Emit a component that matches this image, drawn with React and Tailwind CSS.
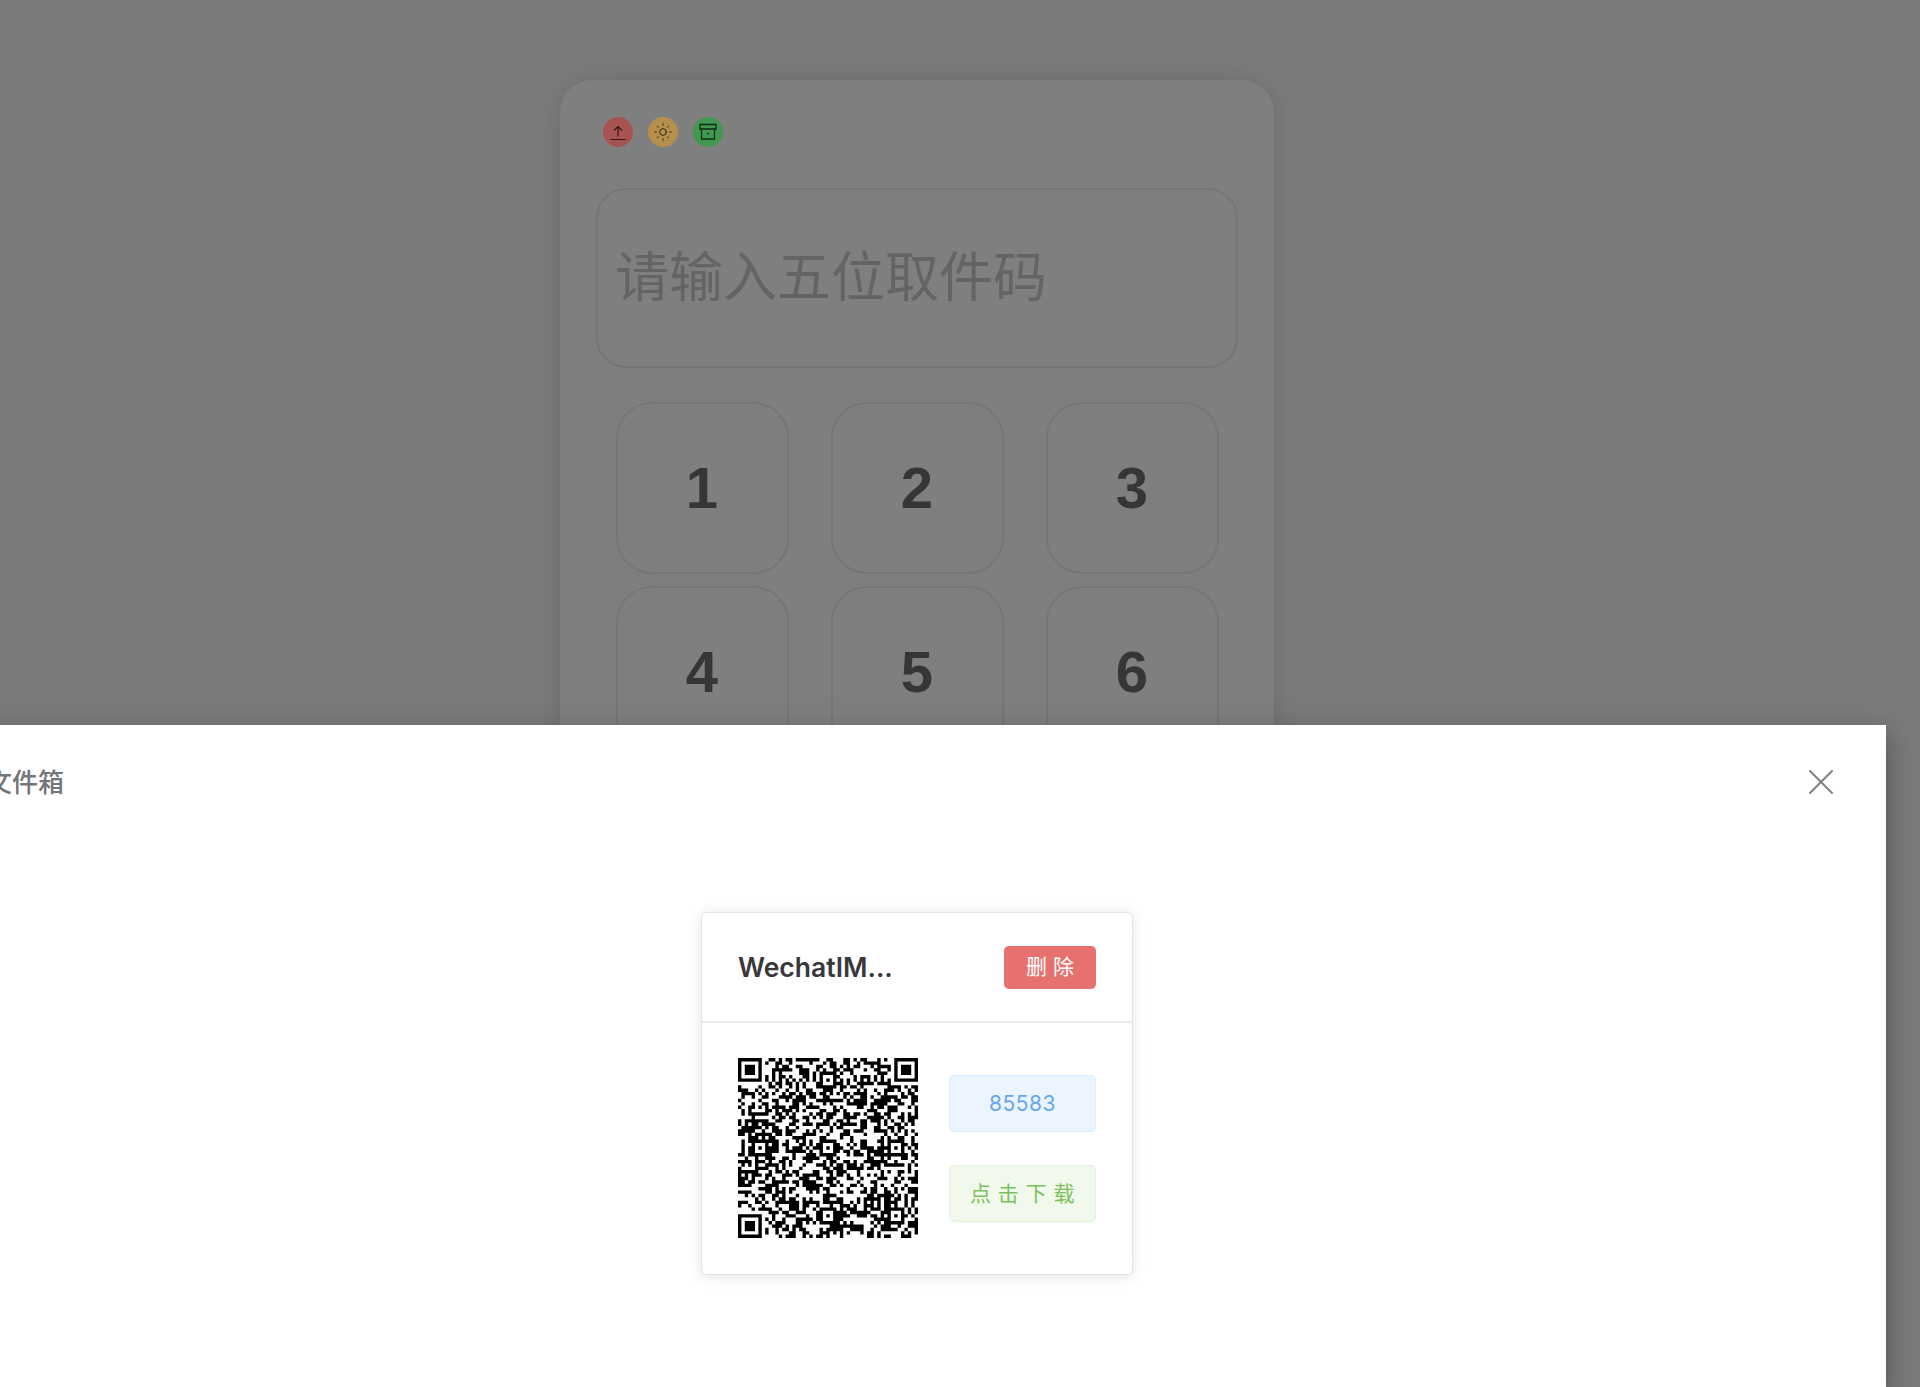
import { Sun, X } from "lucide-react";

const KEYS = ["1", "2", "3", "4", "5", "6"];

// stand-in QR: version 9 layout (53 modules) with seeded data modules
function buildQrPath() {
  const size = 53;
  const grid = [];
  let seed = 85583;
  for (let y = 0; y < size; y++) {
    const row = [];
    for (let x = 0; x < size; x++) {
      seed = (seed * 1103515245 + 12345) & 0x7fffffff;
      row.push(((seed >> 16) & 7) < 4);
    }
    grid.push(row);
  }

  const finder = (ox, oy) => {
    for (let y = -1; y < 8; y++) {
      for (let x = -1; x < 8; x++) {
        const gx = ox + x;
        const gy = oy + y;
        if (gx < 0 || gy < 0 || gx >= size || gy >= size) continue;
        const ring = x === 0 || x === 6 || y === 0 || y === 6;
        const core = x >= 2 && x <= 4 && y >= 2 && y <= 4;
        const inside = x >= 0 && x <= 6 && y >= 0 && y <= 6;
        grid[gy][gx] = inside && (ring || core);
      }
    }
  };
  finder(0, 0);
  finder(size - 7, 0);
  finder(0, size - 7);

  for (let i = 8; i < size - 8; i++) {
    grid[6][i] = i % 2 === 0;
    grid[i][6] = i % 2 === 0;
  }

  [6, 26, 46].forEach((cy) => {
    [6, 26, 46].forEach((cx) => {
      if ((cx === 6 && cy === 6) || (cx === 46 && cy === 6) || (cx === 6 && cy === 46)) return;
      for (let y = -2; y <= 2; y++) {
        for (let x = -2; x <= 2; x++) {
          grid[cy + y][cx + x] = Math.max(Math.abs(x), Math.abs(y)) !== 1;
        }
      }
    });
  });

  let d = "";
  grid.forEach((row, y) => {
    row.forEach((on, x) => {
      if (on) d += `M${x} ${y}h1v1h-1z`;
    });
  });
  return d;
}

const qrPath = buildQrPath();

function App() {
  return (
    <div className="relative h-screen overflow-hidden bg-[#7b7b7b] font-['Inter','Noto_Sans_CJK_SC',sans-serif]">
      {/* PAGE BEHIND THE DRAWER */}
      <div className="flex justify-center pt-[80px] pr-[86px]">
        <div className="h-[800px] w-[714px] rounded-t-[32px] bg-[#807f80] px-[36px] pt-[36.500px] shadow-[0_0_24px_rgba(0,0,0,0.12)]">
          <div className="ml-[7px] flex gap-[15px]">
            <div className="flex h-[30px] w-[30px] items-center justify-center rounded-full bg-[#a85252] text-[#2c1a1a]">
              <svg width="30" height="30" viewBox="0 0 30 30" fill="none" stroke="currentColor" strokeWidth="1.2">
                <path d="M15 9.500v10M11 13.500l4-4 4 4M7.500 22.500h15" />
              </svg>
            </div>
            <div className="flex h-[30px] w-[30px] items-center justify-center rounded-full bg-[#b78f4c] text-[#2f2715]">
              <Sun size={20} strokeWidth={1.2} />
            </div>
            <div className="flex h-[30px] w-[30px] items-center justify-center rounded-full bg-[#3f9a4f] text-[#10291a]">
              <svg width="30" height="30" viewBox="0 0 30 30" fill="none" stroke="currentColor" strokeWidth="1.3">
                <path d="M7 7.500h16v4.500H7zM8.500 12v10h13V12M14 16.500h2" />
              </svg>
            </div>
          </div>

          <input
            readOnly
            placeholder="请输入五位取件码"
            className="mt-[41px] block h-[180px] w-[642px] rounded-[30px] border-2 border-[#767577] bg-transparent px-[17px] text-[54px] text-[#656465] outline-none placeholder:text-[#656465]"
          />

          <div className="mt-[34px] grid grid-cols-[173px_173px_173px] justify-center gap-x-[42px] gap-y-[12px]">
            {KEYS.map((k) => (
              <button
                key={k}
                className="flex h-[172px] items-center justify-center rounded-[36px] border-2 border-[#767577] font-['Liberation_Sans',sans-serif] text-[58px] font-bold text-[#363537]"
              >
                {k}
              </button>
            ))}
          </div>
        </div>
      </div>

      {/* DRAWER */}
      <div className="absolute top-[725px] right-[34px] bottom-0 left-[-52px] bg-white shadow-[0_8px_10px_-5px_rgba(0,0,0,0.2),0_16px_24px_2px_rgba(0,0,0,0.14),0_6px_30px_5px_rgba(0,0,0,0.12)]">
        <div className="flex h-[114px] items-center justify-between pr-[43px] pl-[38px]">
          <span className="text-[26px] font-medium text-[#72767b]">文件箱</span>
          <X size={44} strokeWidth={1.1} className="text-[#7f8285]" />
        </div>

        <div className="mt-[73px] flex justify-center">
          <div className="h-[363px] w-[432px] rounded-[5px] border border-[#e4e5ec] bg-white shadow-[0_2px_14px_rgba(0,0,0,0.11)]">
            <div className="flex h-[110px] items-center justify-between border-b-2 border-[#e8ebee] px-[36px]">
              <span className="pt-[1px] text-[26.5px] font-semibold text-[#38383c]">WechatIM...</span>
              <button className="h-[43px] w-[92px] rounded-[5px] bg-[#e6716f] text-[21px] text-white">删 除</button>
            </div>

            <div className="flex items-center justify-between px-[36px] pt-[35px]">
              <svg width="180" height="180" viewBox="0 0 53 53" className="block">
                <path d={qrPath} fill="#000" />
              </svg>
              <div className="flex flex-col gap-[33px]">
                <div className="flex h-[57px] w-[147px] items-center justify-center rounded-[5px] border border-[#d9ecff] bg-[#ecf5ff] pt-[2px] text-[21px] tracking-[0.5px] text-[#66a6ee]">
                  85583
                </div>
                <div className="flex h-[57px] w-[147px] items-center justify-center rounded-[5px] border border-[#e1f3d8] bg-[#f0f9eb] pt-[2px] text-[21px] tracking-[0.5px] text-[#7cc25a]">
                  点 击 下 载
                </div>
              </div>
            </div>
          </div>
        </div>
      </div>
    </div>
  );
}

export default App;
